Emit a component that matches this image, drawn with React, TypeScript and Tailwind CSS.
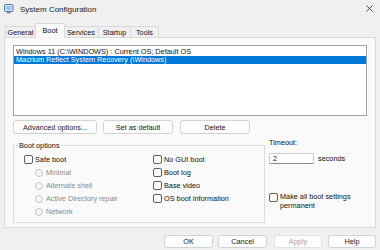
import React from "react";

const Check = () => (
  <span className="block w-[9px] h-[9px] shrink-0 rounded-[2px] border border-[#5f5f5f] bg-[#fbfbfb]" />
);

const Radio = () => (
  <span className="block w-[8px] h-[8px] shrink-0 rounded-full border border-[#c6c6c6] bg-[#f7f7f7]" />
);

const Btn = ({
  children,
  className = "",
}: {
  children: React.ReactNode;
  className?: string;
}) => (
  <div
    className={
      "flex items-center justify-center rounded-[3px] border bg-[#fdfdfd] border-[#d3d3d3] text-[#1a1a1a] " +
      className
    }
  >
    {children}
  </div>
);

export default function App() {
  return (
    <div className="w-[380px] h-[250px] overflow-hidden bg-[#f0f0f0] font-['Liberation_Sans',Arial,sans-serif] text-[7.3px] leading-[9px] text-[#111]">
      {/* Title bar */}
      <div className="flex h-[18px] items-center">
        <svg width="10" height="10" viewBox="0 0 10 10" className="ml-[4px]">
          <rect x="0.5" y="0.5" width="8.5" height="7" rx="0.8" fill="#dfeaf6" stroke="#4a78b0" />
          <rect x="2" y="2" width="5.5" height="4" fill="#9fc2e6" />
          <rect x="3" y="8" width="3.5" height="1.5" fill="#6f8fb5" />
        </svg>
        <span className="ml-[6px] text-[8px] text-[#1b1b1b]">System Configuration</span>
        <svg width="7" height="7" viewBox="0 0 7 7" className="ml-auto mr-[7px] -mt-[2px]">
          <path d="M0.5 0.5 L6.5 6.5 M6.5 0.5 L0.5 6.5" stroke="#333" strokeWidth="0.9" />
        </svg>
      </div>

      {/* Tabs */}
      <div className="flex items-end pl-[5px] h-[19px] box-border">
        <div className="flex h-[11px] w-[31px] items-center justify-center border border-b-0 border-[#d9d9d9] bg-[#f0f0f0]">
          General
        </div>
        <div className="relative z-10 -mb-px flex h-[15px] w-[30px] items-start justify-center pt-[2px] border border-b-0 border-[#d9d9d9] bg-[#fafafa] -ml-px">
          Boot
        </div>
        <div className="flex h-[11px] w-[35px] items-center justify-center border border-b-0 border-l-0 border-[#d9d9d9] bg-[#f0f0f0] -ml-px">
          Services
        </div>
        <div className="flex h-[11px] w-[32px] items-center justify-center border border-b-0 border-l-0 border-[#d9d9d9] bg-[#f0f0f0]">
          Startup
        </div>
        <div className="flex h-[11px] w-[28px] items-center justify-center border border-b-0 border-l-0 border-[#d9d9d9] bg-[#f0f0f0]">
          Tools
        </div>
      </div>

      {/* Panel */}
      <div className="ml-[4px] w-[372px] h-[191px] border border-[#d9d9d9] bg-[#fafafa] pt-[7px] pl-[8px] pr-[8px] box-border">
        {/* Listbox */}
        <div className="h-[71px] w-[354px] border border-[#a3a3a3] bg-white pt-[2px] box-border">
          <div className="h-[8px] leading-[8px] px-[2px] text-[#111]">
            Windows 11 (C:\WINDOWS) : Current OS; Default OS
          </div>
          <div className="h-[8px] leading-[8px] px-[2px] bg-[#0078d7] text-white">
            Macrium Reflect System Recovery (\Windows)
          </div>
        </div>

        {/* Buttons */}
        <div className="mt-[4px] flex">
          <Btn className="h-[14px] w-[84px]">Advanced options...</Btn>
          <Btn className="ml-[6px] h-[14px] w-[70px]">Set as default</Btn>
          <Btn className="ml-[7px] h-[14px] w-[70px]">Delete</Btn>
        </div>

        {/* Lower section */}
        <div className="mt-[4px] flex items-start">
          {/* Boot options group */}
          <div className="relative mt-[7px] h-[78px] w-[252px] border border-[#dcdcdc] pt-[7px] pl-[10px] box-border">
            <span className="absolute -top-[5px] left-[4px] bg-[#fafafa] px-[1px] leading-[9px]">
              Boot options
            </span>
            <div className="grid grid-cols-[129px_1fr]">
              <div className="flex flex-col">
                <div className="flex h-[13px] items-center gap-[2px]">
                  <Check />
                  <span>Safe boot</span>
                </div>
                <div className="flex h-[13px] items-center gap-[3px] pl-[11px] text-[#8a8a8a]">
                  <Radio />
                  <span>Minimal</span>
                </div>
                <div className="flex h-[13px] items-center gap-[3px] pl-[11px] text-[#8a8a8a]">
                  <Radio />
                  <span>Alternate shell</span>
                </div>
                <div className="flex h-[13px] items-center gap-[3px] pl-[11px] text-[#8a8a8a]">
                  <Radio />
                  <span>Active Directory repair</span>
                </div>
                <div className="flex h-[13px] items-center gap-[3px] pl-[11px] text-[#8a8a8a]">
                  <Radio />
                  <span>Network</span>
                </div>
              </div>
              <div className="flex flex-col">
                <div className="flex h-[13px] items-center gap-[2px]">
                  <Check />
                  <span>No GUI boot</span>
                </div>
                <div className="flex h-[13px] items-center gap-[2px]">
                  <Check />
                  <span>Boot log</span>
                </div>
                <div className="flex h-[13px] items-center gap-[2px]">
                  <Check />
                  <span>Base video</span>
                </div>
                <div className="flex h-[13px] items-center gap-[2px]">
                  <Check />
                  <span>OS boot information</span>
                </div>
              </div>
            </div>
          </div>

          {/* Timeout column */}
          <div className="ml-[4px] flex flex-col">
            <div className="h-[10px] leading-[10px]">Timeout:</div>
            <div className="mt-[5px] flex items-center">
              <div className="h-[11px] w-[45px] border border-[#cfcfcf] border-b-[#8a8a8a] bg-white pl-[3px] leading-[9px] box-border">
                2
              </div>
              <span className="ml-[4px]">seconds</span>
            </div>
            <div className="mt-[28px] flex items-start gap-[2px]">
              <span className="mt-[1px]">
                <Check />
              </span>
              <span className="leading-[9px]">
                Make all boot settings
                <br />
                permanent
              </span>
            </div>
          </div>
        </div>
      </div>

      {/* Bottom buttons */}
      <div className="mt-[7px] flex justify-end pr-[4px]">
        <Btn className="h-[13px] w-[49px] border-[#0067c0]">OK</Btn>
        <Btn className="ml-[5px] h-[13px] w-[49px]">Cancel</Btn>
        <Btn className="ml-[7px] h-[13px] w-[48px] bg-[#f5f5f5] border-[#e3e3e3] text-[#a3a3a3]">Apply</Btn>
        <Btn className="ml-[6px] h-[13px] w-[48px]">Help</Btn>
      </div>
    </div>
  );
}
